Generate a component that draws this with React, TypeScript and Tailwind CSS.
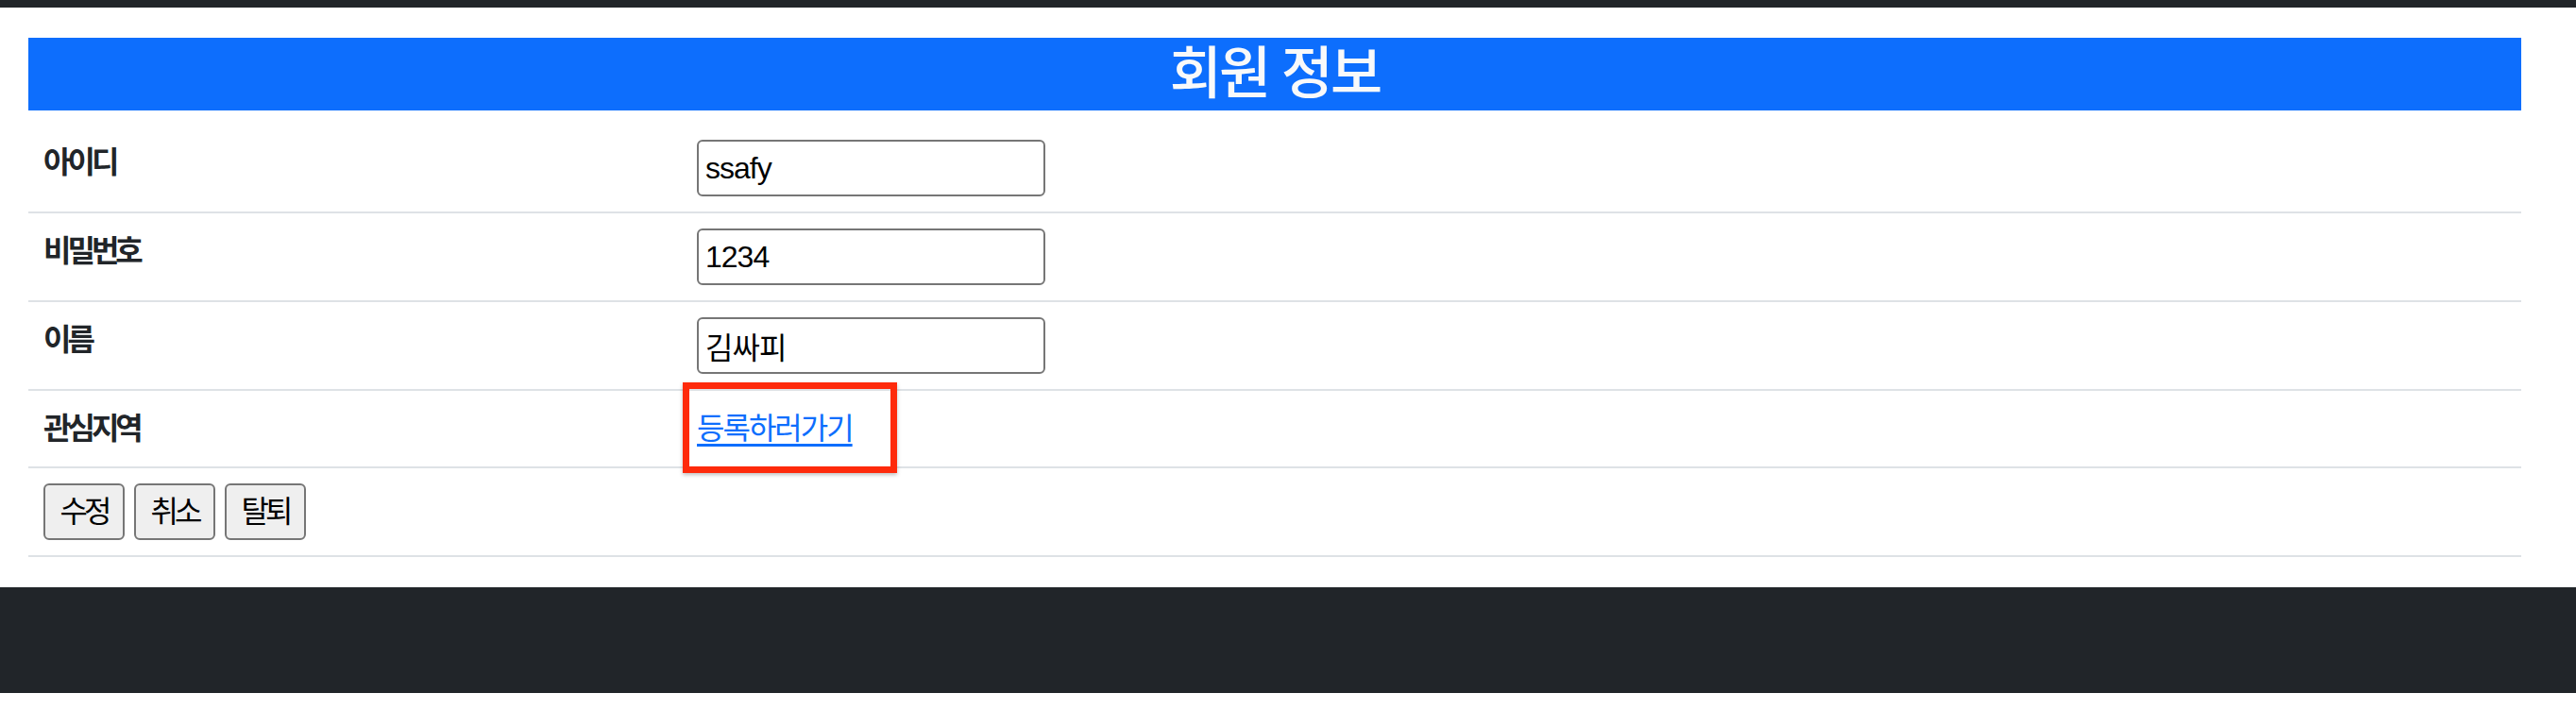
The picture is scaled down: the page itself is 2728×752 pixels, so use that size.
const font = { fontFamily: '"Liberation Sans", "Noto Sans CJK KR", sans-serif' };

const rows = [
  { label: "아이디", value: "ssafy" },
  { label: "비밀번호", value: "1234" },
  { label: "이름", value: "김싸피" },
];

const Field = ({ value }: { value: string }) => (
  <input
    type="text"
    defaultValue={value}
    className="w-[369px] h-[60px] border-2 border-[#767676] rounded-[6px] px-[7px] text-[32px] text-black bg-white outline-none tracking-[-1px]"
    style={font}
  />
);

const Label = ({ children }: { children: string }) => (
  <div className="w-[692px] shrink-0 p-4 text-[32px] leading-[48px] font-bold text-[#212529] tracking-[-4px]">
    {children}
  </div>
);

const ActionButton = ({ children }: { children: string }) => (
  <button className="w-[86px] h-[60px] bg-[#efefef] border-2 border-[#767676] rounded-[6px] text-[32px] text-black tracking-[-4px]">
    {children}
  </button>
);

export default function App() {
  return (
    <div className="bg-white min-h-[752px]" style={font}>
      <div className="h-[8px] bg-[#212529]" />
      <main className="ml-[30px] w-[2640px] pt-[32px]">
        <h2 className="bg-[#0d6efd] text-[#f8f9fa] text-center text-[60px] leading-[77px] font-medium tracking-[-3px] mb-[15px]">
          회원 정보
        </h2>
        <div className="mb-[32px]">
          {rows.map((row) => (
            <div key={row.label} className="flex border-b-2 border-[#dee2e6]">
              <Label>{row.label}</Label>
              <div className="p-4">
                <Field value={row.value} />
              </div>
            </div>
          ))}
          <div className="flex border-b-2 border-[#dee2e6]">
            <Label>관심지역</Label>
            <div className="relative p-4 text-[32px] leading-[48px]">
              <a href="#" className="text-[#0d6efd] underline underline-offset-[5px] tracking-[-2px]">
                등록하러가기
              </a>
              <div className="absolute left-[1px] top-[-9px] w-[227px] h-[96px] border-[7px] border-[#fe2a0b] shadow-[0_2px_4px_rgba(0,0,0,0.25)]" />
            </div>
          </div>
          <div className="flex gap-[10px] p-4 border-b-2 border-[#dee2e6]">
            <ActionButton>수정</ActionButton>
            <ActionButton>취소</ActionButton>
            <ActionButton>탈퇴</ActionButton>
          </div>
        </div>
      </main>
      <footer className="h-[112px] bg-[#212529]" />
    </div>
  );
}
